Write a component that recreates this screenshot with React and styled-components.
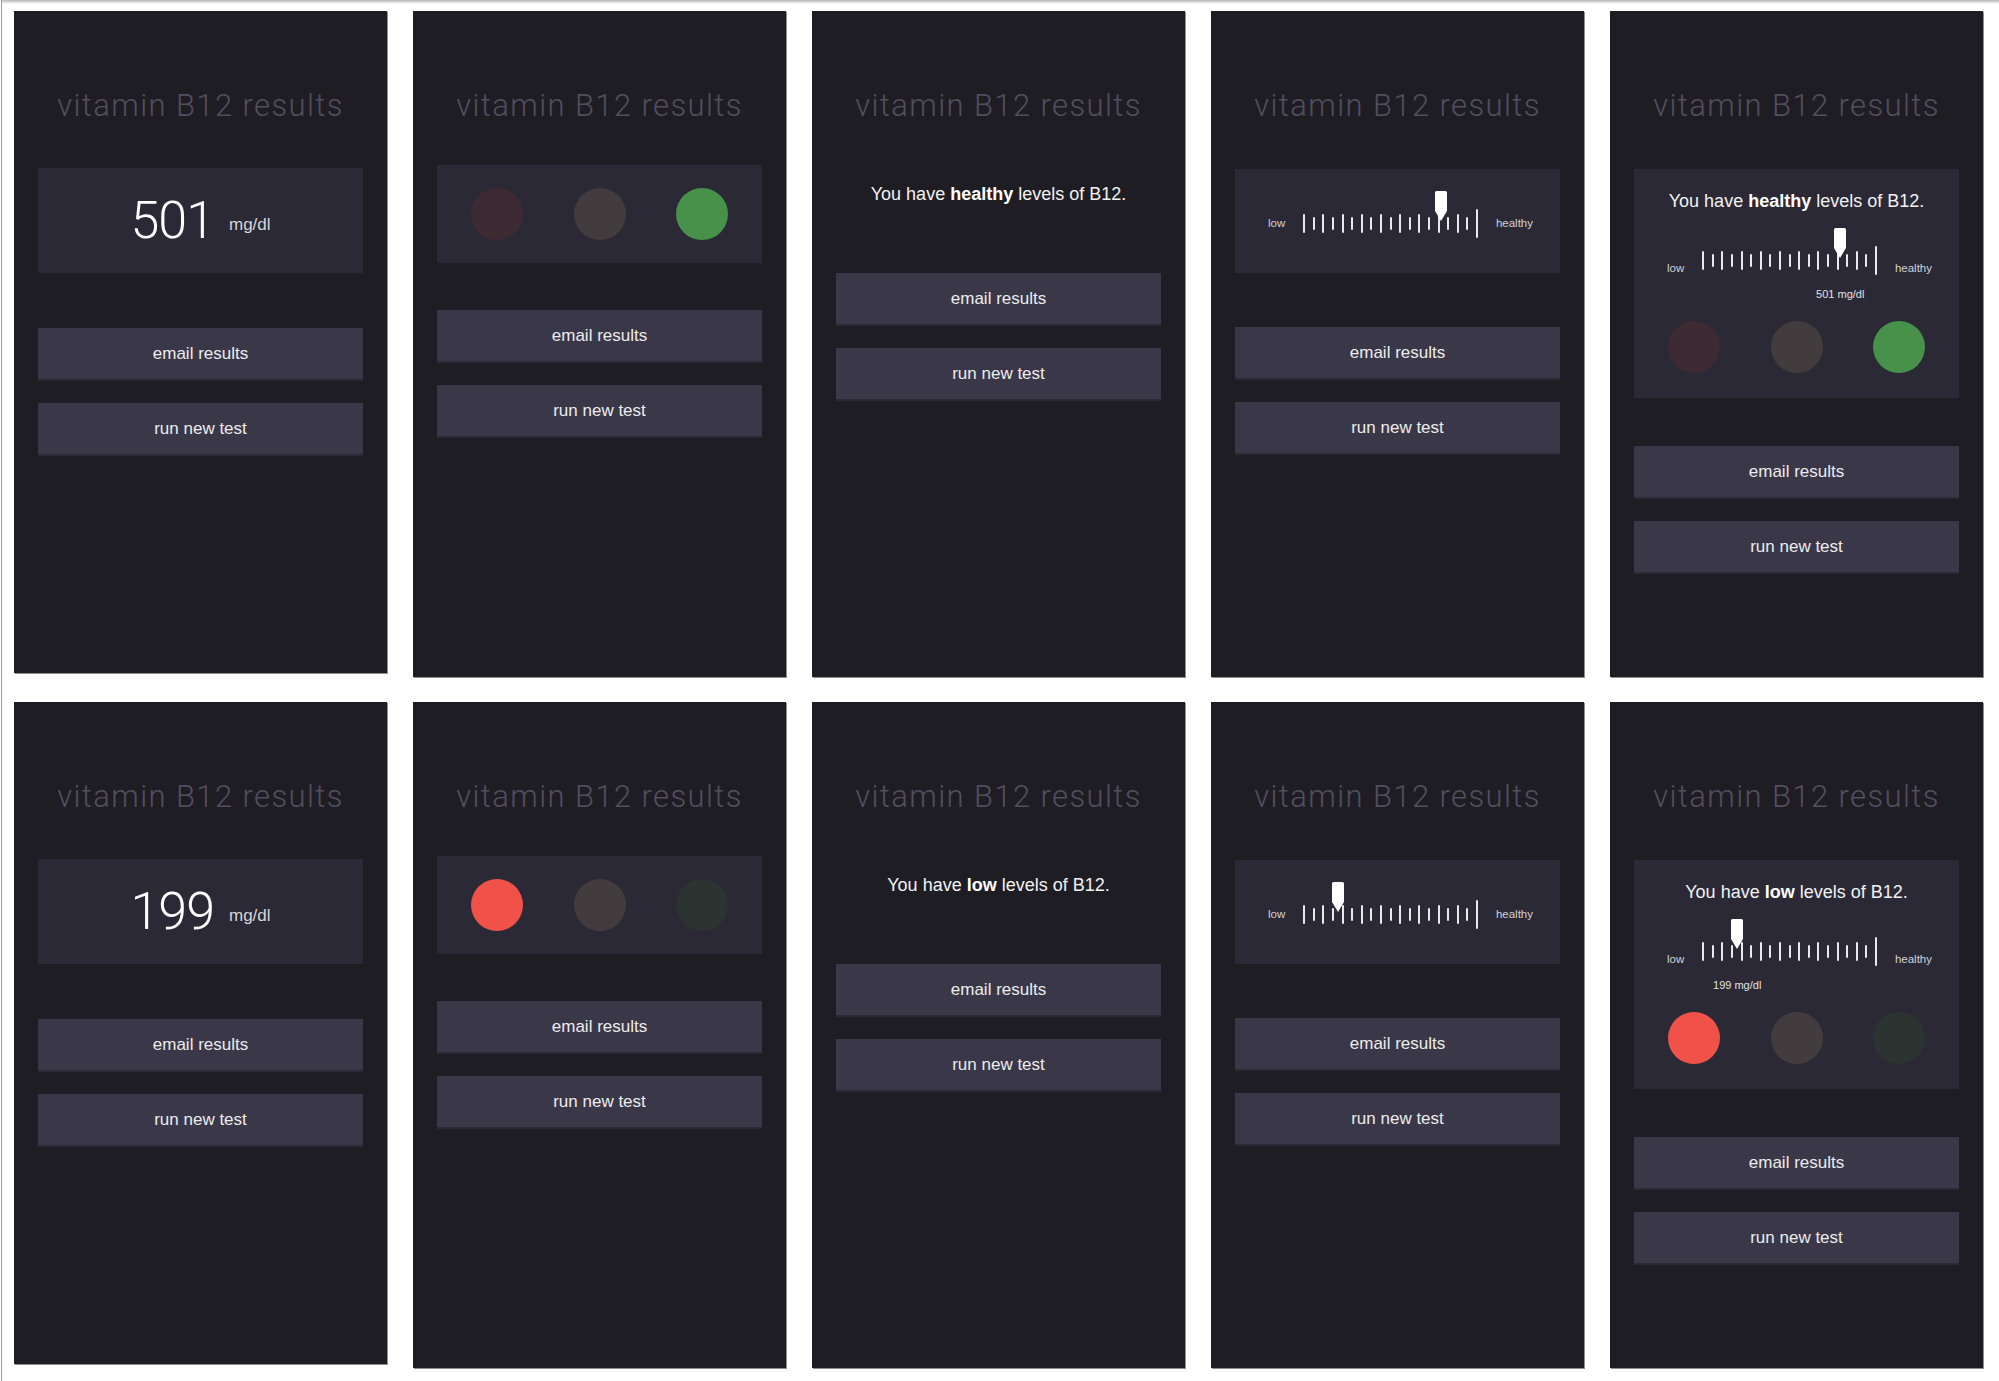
import styled, { createGlobalStyle } from "styled-components"

const GlobalStyle = createGlobalStyle`
	html, body {
		margin: 0;
		padding: 0;
		background: #ffffff;
	}
	body {
		font-family: "Liberation Sans", Arial, sans-serif;
	}
`

const results = [
	{
		value: 501,
		level: "healthy",
		pos: 79,
		lights: ["#3e2a33", "#433c3e", "#47914a"],
	},
	{
		value: 199,
		level: "low",
		pos: 20,
		lights: ["#f0524a", "#433c3e", "#2b3430"],
	},
]

const TICKS = 19

const Scale = ({ pos, value, align, showValue }) => {
	return (
		<ScaleRow $align={align}>
			<ScaleLabel>low</ScaleLabel>
			<Track>
				{Array.from({ length: TICKS }).map((_, i) => (
					<Tick key={i} $h={i === TICKS - 1 ? 29 : i % 2 === 0 ? 19 : 13} />
				))}
				<Marker style={{ left: `calc(${pos}% - 6px)` }} width="12" height="30" viewBox="0 0 12 30">
					<path d="M1.5 0 H10.5 Q12 0 12 1.5 V20 L6 30 L0 20 V1.5 Q0 0 1.5 0 Z" fill="#ffffff" />
				</Marker>
				{showValue && <ValueTag style={{ left: `${pos}%` }}>{value} mg/dl</ValueTag>}
			</Track>
			<ScaleLabel>healthy</ScaleLabel>
		</ScaleRow>
	)
}

const Lights = ({ colors }) => (
	<LightsRow>
		{colors.map((c, i) => (
			<Light key={i} $color={c} />
		))}
	</LightsRow>
)

const Actions = ({ top }) => (
	<ActionGroup $top={top}>
		<ActionButton>email results</ActionButton>
		<ActionButton>run new test</ActionButton>
	</ActionGroup>
)

const Message = ({ level }) => (
	<>
		You have <strong>{level}</strong> levels of B12.
	</>
)

const ResultRow = ({ result }) => (
	<>
		<Panel $short>
			<Title>vitamin B12 results</Title>
			<ValueCard>
				<BigNumber>{result.value}</BigNumber>
				<Unit>mg/dl</Unit>
			</ValueCard>
			<Actions top={55} />
		</Panel>

		<Panel>
			<Title>vitamin B12 results</Title>
			<LightsCard>
				<Lights colors={result.lights} />
			</LightsCard>
			<Actions top={47} />
		</Panel>

		<Panel>
			<Title>vitamin B12 results</Title>
			<PlainMessage>
				<Message level={result.level} />
			</PlainMessage>
			<Actions top={68} />
		</Panel>

		<Panel>
			<Title>vitamin B12 results</Title>
			<ScaleCard>
				<Scale pos={result.pos} value={result.value} align="center" />
			</ScaleCard>
			<Actions top={54} />
		</Panel>

		<Panel>
			<Title>vitamin B12 results</Title>
			<SummaryCard>
				<SummaryText>
					<Message level={result.level} />
				</SummaryText>
				<Scale pos={result.pos} value={result.value} align="flex-end" showValue />
				<SummaryLights>
					<Lights colors={result.lights} />
				</SummaryLights>
			</SummaryCard>
			<Actions top={48} />
		</Panel>
	</>
)

const App = () => {
	return (
		<Page>
			<GlobalStyle />
			<Board>
				{results.map((r) => (
					<ResultRow key={r.value} result={r} />
				))}
			</Board>
		</Page>
	)
}

const Page = styled.div`
	min-height: 1381px;
	box-sizing: border-box;
	margin-left: 1px;
	border-left: 1px solid #9a9a9a;
	background: linear-gradient(#b5b5b5, #ffffff 4px);
	padding: 11px 0 0 12px;
`

const Board = styled.div`
	display: grid;
	grid-template-columns: repeat(5, 373px);
	column-gap: 26px;
	row-gap: 25px;
	align-items: start;
`

const Panel = styled.section`
	height: ${(p) => (p.$short ? 662 : 666)}px;
	box-sizing: border-box;
	background: #1f1d24;
	box-shadow: 1px 1px 0 #8e8e8e;
	padding: 77px 24px 0;
	display: flex;
	flex-direction: column;
`

const Title = styled.h1`
	margin: 0;
	font-family: Roboto, "Liberation Sans", sans-serif;
	font-weight: 300;
	font-size: 31px;
	letter-spacing: 1.4px;
	line-height: 36px;
	color: #524e5d;
	text-align: center;
	white-space: nowrap;
`

const ValueCard = styled.div`
	margin-top: 44px;
	height: 105px;
	background: #2b2936;
	display: flex;
	align-items: center;
	justify-content: center;
	color: #ffffff;
`

const BigNumber = styled.span`
	font-family: Roboto, "Liberation Sans", sans-serif;
	font-weight: 300;
	font-size: 52px;
	letter-spacing: -1px;
	line-height: 60px;
`

const Unit = styled.span`
	font-size: 17px;
	color: #d6d6d6;
	margin-left: 15px;
	align-self: center;
	margin-top: 8px;
`

const LightsCard = styled.div`
	margin-top: 41px;
	height: 98px;
	background: #2b2936;
	display: flex;
	align-items: center;
	padding: 0 34px;
`

const LightsRow = styled.div`
	flex: 1;
	display: flex;
	justify-content: space-between;
	align-items: center;
`

const Light = styled.span`
	width: 52px;
	height: 52px;
	border-radius: 50%;
	background: ${(p) => p.$color};
`

const PlainMessage = styled.p`
	margin: 59px 0 0;
	font-size: 18px;
	line-height: 22px;
	color: #f2f2f2;
	text-align: center;
	strong {
		color: #ffffff;
		font-weight: 700;
	}
`

const ScaleCard = styled.div`
	margin-top: 45px;
	height: 104px;
	background: #2b2936;
	display: flex;
	align-items: center;
	justify-content: center;
	padding-top: 4px;
	box-sizing: border-box;
`

const SummaryCard = styled.div`
	margin-top: 45px;
	height: 229px;
	box-sizing: border-box;
	background: #2b2936;
	padding: 21px 0 0;
	display: flex;
	flex-direction: column;
	align-items: center;
`

const SummaryText = styled.p`
	margin: 0 0 34px;
	font-size: 18px;
	line-height: 22px;
	color: #f2f2f2;
	text-align: center;
	strong {
		color: #ffffff;
		font-weight: 700;
	}
`

const SummaryLights = styled.div`
	align-self: stretch;
	display: flex;
	padding: 0 34px;
	margin-top: 46px;
`

const ScaleRow = styled.div`
	display: flex;
	align-items: ${(p) => p.$align};
	justify-content: center;
	gap: 18px;
	padding-left: 6px;
`

const ScaleLabel = styled.span`
	font-size: 11.5px;
	line-height: 13px;
	color: #d2d2d2;
`

const Track = styled.div`
	position: relative;
	display: flex;
	align-items: center;
	gap: 7.6px;
	height: 29px;
`

const Tick = styled.span`
	width: 2px;
	height: ${(p) => p.$h}px;
	background: #e9e9e9;
	border-radius: 1px;
`

const Marker = styled.svg`
	position: absolute;
	top: -18px;
	display: block;
`

const ValueTag = styled.span`
	position: absolute;
	top: calc(100% + 13px);
	transform: translateX(-50%);
	font-size: 11px;
	line-height: 13px;
	color: #e2e2e2;
	white-space: nowrap;
`

const ActionGroup = styled.div`
	margin-top: ${(p) => p.$top}px;
	display: flex;
	flex-direction: column;
	gap: 24px;
`

const ActionButton = styled.button`
	height: 51px;
	border: none;
	padding: 0;
	background: #3a3748;
	box-shadow: 0 2px 0 #2b2935;
	color: #ececec;
	font-family: "Liberation Sans", Arial, sans-serif;
	font-size: 17px;
	cursor: pointer;
`

export default App
